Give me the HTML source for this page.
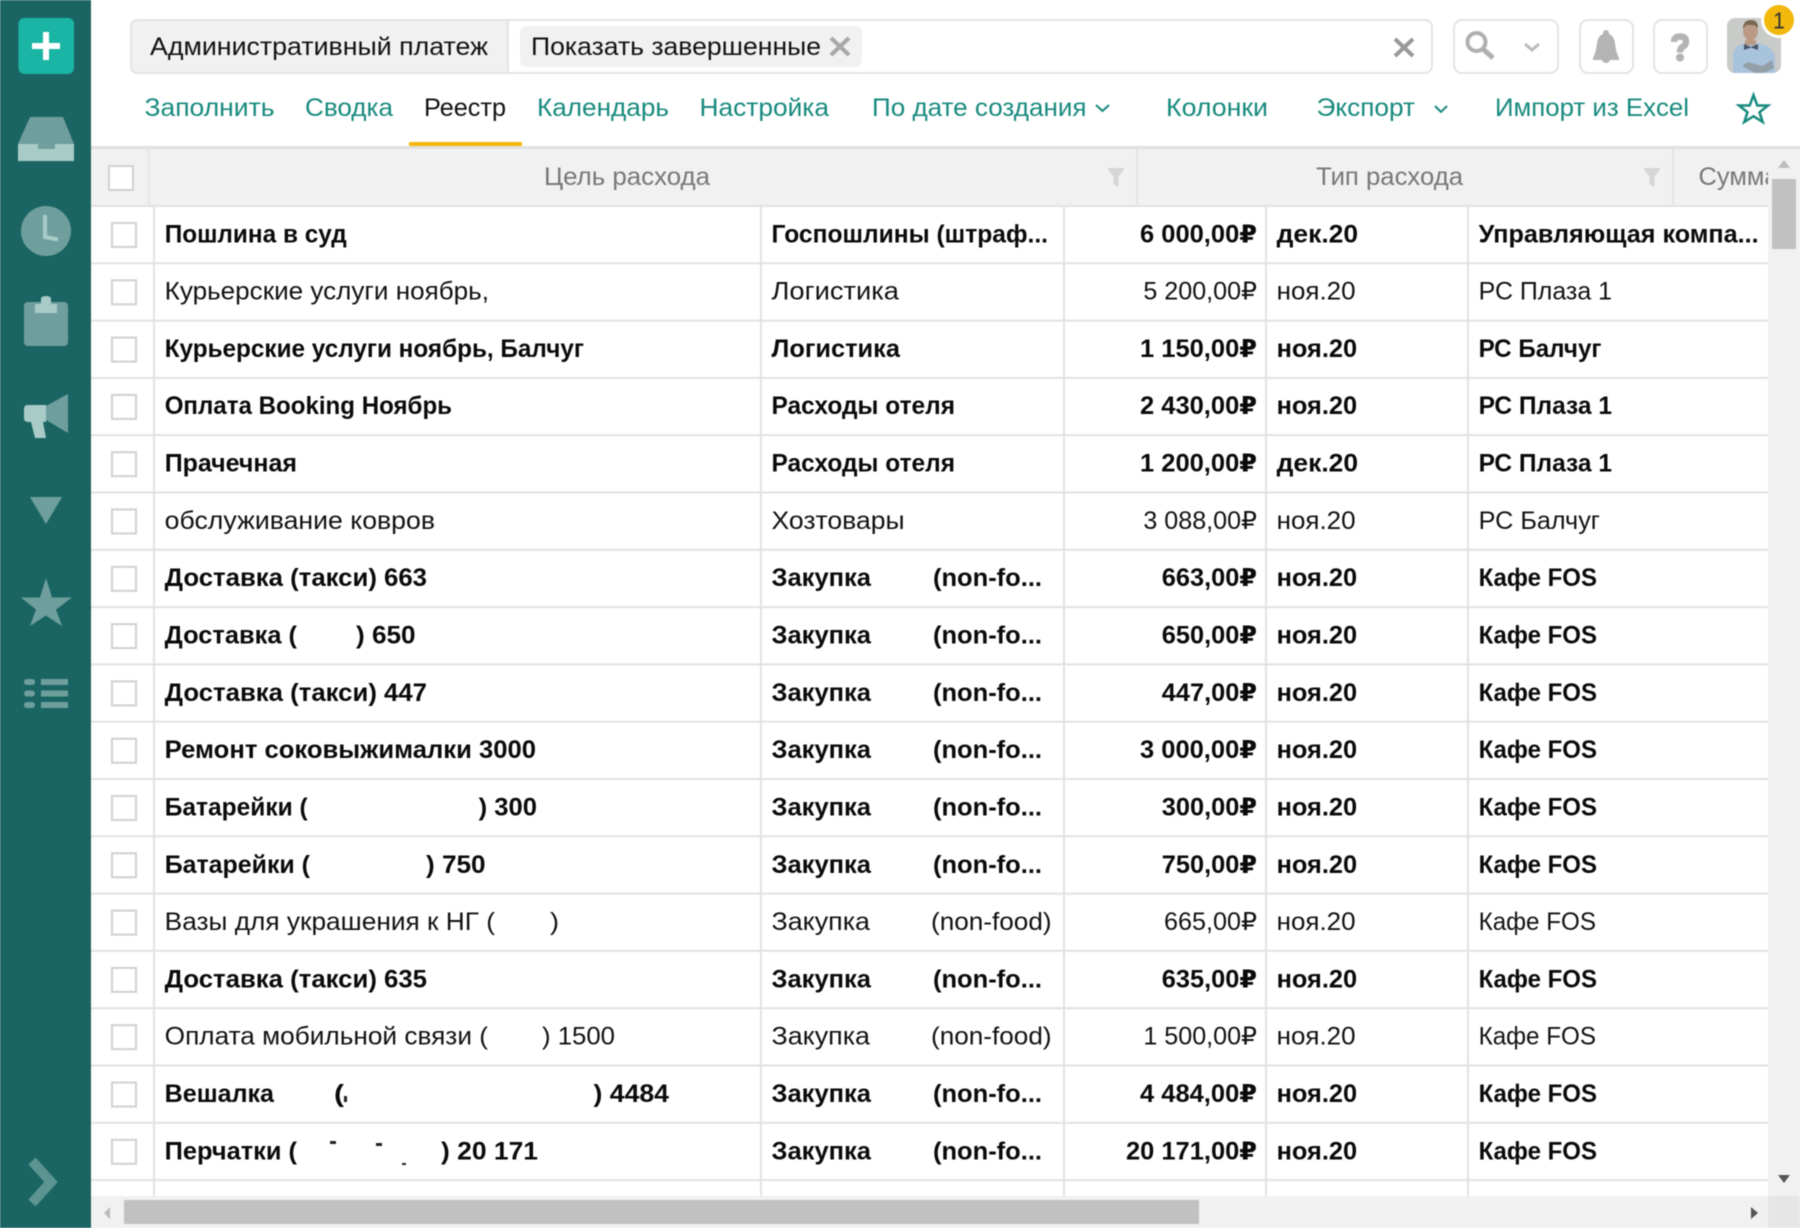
<!DOCTYPE html>
<html lang="ru"><head><meta charset="utf-8"><title>Реестр</title>
<style>
html,body{margin:0;padding:0;background:#fff;width:1800px;height:1228px;overflow:hidden}
svg{display:block;filter:blur(.4px)}
text{font-family:"Liberation Sans","DejaVu Sans",sans-serif;font-size:25px;fill:#111}
.b text,text.b{font-weight:700;fill:#0a0a0a}
.t{fill:#178a7e}
.h{fill:#777}
</style></head><body>
<svg width="1800" height="1228" viewBox="0 0 1800 1228" xmlns="http://www.w3.org/2000/svg">
<defs><clipPath id="hc"><rect x="1675" y="149" width="93" height="57"/></clipPath></defs>
<rect width="1800" height="1228" fill="#fff"/>

<!-- sidebar -->
<rect x="0" y="0" width="91" height="1228" fill="#1a6563"/>
<rect x="18.500" y="18" width="55.500" height="56" rx="6" fill="#1ab5a5"/>
<path d="M46 32V60M32 46H60" stroke="#fff" stroke-width="6" fill="none"/>
<path d="M30 117H63L74 144V150H18V144Z" fill="#6f9f9d"/>
<path d="M18 144H38V149H55V144H74V161H18Z" fill="#a9cbc8"/>
<circle cx="46" cy="231" r="25" fill="#6f9f9d"/>
<path d="M45 215V237L58 239.500" stroke="#a9cbc8" stroke-width="4" fill="none"/>
<rect x="24" y="302" width="44" height="44" rx="4" fill="#6f9f9d"/>
<path d="M35 304H41V299Q41 296 46 296Q51 296 51 299V304H57V313H35Z" fill="#a9cbc8"/>
<path d="M46 406L68 394V433L46 420Z" fill="#6f9f9d"/>
<path d="M28 405H46V422H43L46 438H35L31 422H28Q24 422 24 418V409Q24 405 28 405Z" fill="#a9cbc8"/>
<path d="M30 497H62L46 524Z" fill="#6f9f9d"/>
<path d="M46 578L52 597.500H72L56 609.500L62 626L46 615.500L30 626L36 609.500L21 597.500H40Z" fill="#6f9f9d"/>
<g fill="#6f9f9d"><rect x="24" y="679" width="11" height="6" rx="3"/><rect x="24" y="690.500" width="11" height="6" rx="3"/><rect x="24" y="702" width="11" height="6" rx="3"/><rect x="41" y="679" width="27" height="6"/><rect x="41" y="690.500" width="27" height="6"/><rect x="41" y="702" width="27" height="6"/></g>
<path d="M32 1161L51 1182L32 1203" stroke="#5b9491" stroke-width="10" fill="none"/>

<!-- top bar -->
<rect x="131" y="20" width="1301" height="53" rx="7" fill="#fff" stroke="#e4e4e4" stroke-width="2"/>
<path d="M508 20H138Q131 20 131 27V66Q131 73 138 73H508Z" fill="#f1f1f1" stroke="#e4e4e4" stroke-width="2"/>
<text x="150" y="55" textLength="338" lengthAdjust="spacingAndGlyphs">Административный платеж</text>
<rect x="520" y="26" width="342" height="41" rx="7" fill="#f1f1f1"/>
<text x="531" y="55" textLength="290" lengthAdjust="spacingAndGlyphs">Показать завершенные</text>
<path d="M831 38L849 55M849 38L831 55" stroke="#a8a8a8" stroke-width="4" fill="none"/>
<path d="M1395 39L1413 56M1413 39L1395 56" stroke="#999" stroke-width="4" fill="none"/>
<rect x="1454" y="20" width="104" height="53" rx="8" fill="#fff" stroke="#e4e4e4" stroke-width="2"/>
<circle cx="1476.500" cy="42" r="9" fill="none" stroke="#b0b0b0" stroke-width="4"/>
<path d="M1483 49L1493 58" stroke="#b0b0b0" stroke-width="5" fill="none"/>
<path d="M1525 44L1532 50L1539 44" stroke="#bbb" stroke-width="3" fill="none"/>
<rect x="1580" y="20" width="53" height="53" rx="8" fill="#fff" stroke="#e4e4e4" stroke-width="2"/>
<path d="M1606 30Q1609 30 1609 34Q1614 36 1615 43Q1616 53 1619 58V60H1593V58Q1596 53 1597 43Q1598 36 1603 34Q1603 30 1606 30ZM1602 60H1610Q1609 63 1606 63Q1603 63 1602 60Z" fill="#b4b4b4"/>
<rect x="1654" y="20" width="53" height="53" rx="8" fill="#fff" stroke="#e4e4e4" stroke-width="2"/>
<path d="M1674 42Q1674 36.500 1680 36.500Q1686 36.500 1686 41.500Q1686 45 1682.500 47Q1680 48.500 1680 52.500" stroke="#b4b4b4" stroke-width="6.500" fill="none"/>
<circle cx="1680" cy="57.500" r="4" fill="#b4b4b4"/>

<!-- avatar -->
<rect x="1727" y="18" width="54" height="55" rx="8" fill="#c9cbc9"/>
<path d="M1733 73V54Q1734 46 1742 44L1751 42L1761 44Q1772 46 1775 56V73Z" fill="#a8c3dc"/>
<ellipse cx="1750.500" cy="31" rx="7.500" ry="9.500" fill="#ba9a84"/>
<path d="M1743 29Q1743 20 1751 20Q1758 20 1758 28L1754 25H1746Z" fill="#77684f"/>
<path d="M1745 40H1756V45H1745Z" fill="#ba9a84"/>
<path d="M1744 44L1751 47L1758 44V50L1751 47.500L1744 50Z" fill="#4b5468"/>
<path d="M1755 73L1742 66L1748 62L1762 66L1772 60L1774 68L1764 73Z" fill="#94a0a8"/>
<circle cx="1779" cy="20" r="18" fill="#fff"/>
<circle cx="1779" cy="20" r="15" fill="#f2b90c"/>
<text x="1773" y="28.500" textLength="12" lengthAdjust="spacingAndGlyphs" style="font-size:23px;fill:#333">1</text>

<!-- nav -->
<text class="t" x="144.500" y="116" textLength="130" lengthAdjust="spacingAndGlyphs">Заполнить</text>
<text class="t" x="305" y="116" textLength="88" lengthAdjust="spacingAndGlyphs">Сводка</text>
<text x="424" y="116" textLength="82" lengthAdjust="spacingAndGlyphs">Реестр</text>
<text class="t" x="537" y="116" textLength="132" lengthAdjust="spacingAndGlyphs">Календарь</text>
<text class="t" x="699.500" y="116" textLength="129.500" lengthAdjust="spacingAndGlyphs">Настройка</text>
<text class="t" x="872" y="116" textLength="214.500" lengthAdjust="spacingAndGlyphs">По дате создания</text>
<path d="M1096 105L1102.500 111L1109 105" stroke="#178a7e" stroke-width="2" fill="none"/>
<text class="t" x="1166" y="116" textLength="102" lengthAdjust="spacingAndGlyphs">Колонки</text>
<text class="t" x="1316.500" y="116" textLength="98.500" lengthAdjust="spacingAndGlyphs">Экспорт</text>
<path d="M1435 106L1441 112L1447 106" stroke="#178a7e" stroke-width="2" fill="none"/>
<text class="t" x="1495" y="116" textLength="194" lengthAdjust="spacingAndGlyphs">Импорт из Excel</text>
<path d="M1753.500 95L1757.300 105.500H1768L1759.500 112.300L1762.700 122L1753.500 116.200L1744.300 122L1747.500 112.300L1739 105.500H1749.700Z" fill="none" stroke="#178a7e" stroke-width="2.500"/>
<rect x="91" y="146" width="1709" height="3" fill="#e0e0e0"/>
<rect x="409" y="142" width="113" height="4" rx="1" fill="#f2b90c"/>

<!-- table header -->
<rect x="91" y="149" width="1677" height="57" fill="#f1f1f1"/>
<rect x="148" y="149" width="2" height="57" fill="#e6e6e6"/>
<rect x="1136" y="149" width="2" height="57" fill="#e6e6e6"/>
<rect x="1672" y="149" width="2" height="57" fill="#e6e6e6"/>
<rect x="109" y="166" width="24" height="24" fill="#fff" stroke="#d0d0d0" stroke-width="2"/>
<text class="h" x="544" y="185" textLength="166" lengthAdjust="spacingAndGlyphs">Цель расхода</text>
<text class="h" x="1316" y="185" textLength="147" lengthAdjust="spacingAndGlyphs">Тип расхода</text>
<text class="h" x="1698.500" y="185" textLength="80" lengthAdjust="spacingAndGlyphs" clip-path="url(#hc)">Сумма</text>
<path d="M1107 168H1125L1118.500 177V187L1113.500 184V177Z" fill="#d6d6d6"/>
<path d="M1643 168H1661L1654.500 177V187L1649.500 184V177Z" fill="#d6d6d6"/>

<!-- grid lines -->
<g fill="#e2e2e2">
<rect x="91" y="205" width="1677" height="2"/><rect x="91" y="262.300" width="1677" height="2"/><rect x="91" y="319.600" width="1677" height="2"/><rect x="91" y="376.900" width="1677" height="2"/><rect x="91" y="434.200" width="1677" height="2"/><rect x="91" y="491.500" width="1677" height="2"/><rect x="91" y="548.800" width="1677" height="2"/><rect x="91" y="606.100" width="1677" height="2"/><rect x="91" y="663.400" width="1677" height="2"/><rect x="91" y="720.700" width="1677" height="2"/><rect x="91" y="778" width="1677" height="2"/><rect x="91" y="835.300" width="1677" height="2"/><rect x="91" y="892.600" width="1677" height="2"/><rect x="91" y="949.900" width="1677" height="2"/><rect x="91" y="1007.200" width="1677" height="2"/><rect x="91" y="1064.500" width="1677" height="2"/><rect x="91" y="1121.800" width="1677" height="2"/><rect x="91" y="1179.100" width="1677" height="2"/>
<rect x="153" y="206" width="2" height="990"/><rect x="760" y="206" width="2" height="990"/><rect x="1063" y="206" width="2" height="990"/><rect x="1265" y="206" width="2" height="990"/><rect x="1467" y="206" width="2" height="990"/>
</g>
<!-- checkboxes -->
<g fill="#fff" stroke="#d0d0d0" stroke-width="2">
<rect x="112" y="223" width="24" height="24"/><rect x="112" y="280.300" width="24" height="24"/><rect x="112" y="337.600" width="24" height="24"/><rect x="112" y="394.900" width="24" height="24"/><rect x="112" y="452.200" width="24" height="24"/><rect x="112" y="509.500" width="24" height="24"/><rect x="112" y="566.800" width="24" height="24"/><rect x="112" y="624.100" width="24" height="24"/><rect x="112" y="681.400" width="24" height="24"/><rect x="112" y="738.700" width="24" height="24"/><rect x="112" y="796" width="24" height="24"/><rect x="112" y="853.300" width="24" height="24"/><rect x="112" y="910.600" width="24" height="24"/><rect x="112" y="967.900" width="24" height="24"/><rect x="112" y="1025.200" width="24" height="24"/><rect x="112" y="1082.500" width="24" height="24"/><rect x="112" y="1139.800" width="24" height="24"/>
</g>

<!-- rows -->
<g class="b" transform="translate(0,242.300)">
<text x="164.700" textLength="182" lengthAdjust="spacingAndGlyphs">Пошлина в суд</text>
<text x="771.500" textLength="276.500" lengthAdjust="spacingAndGlyphs">Госпошлины (штраф...</text>
<text x="1140" textLength="117" lengthAdjust="spacingAndGlyphs">6 000,00₽</text>
<text x="1276.600" textLength="81.500" lengthAdjust="spacingAndGlyphs">дек.20</text>
<text x="1478.600" textLength="280" lengthAdjust="spacingAndGlyphs">Управляющая компа...</text>
</g>
<g transform="translate(0,299.600)">
<text x="164.700" textLength="324.300" lengthAdjust="spacingAndGlyphs">Курьерские услуги ноябрь,</text>
<text x="771.500" textLength="127.500" lengthAdjust="spacingAndGlyphs">Логистика</text>
<text x="1143.400" textLength="113.600" lengthAdjust="spacingAndGlyphs">5 200,00₽</text>
<text x="1276.600" textLength="79" lengthAdjust="spacingAndGlyphs">ноя.20</text>
<text x="1478.600" textLength="133.400" lengthAdjust="spacingAndGlyphs">РС Плаза 1</text>
</g>
<g class="b" transform="translate(0,356.900)">
<text x="164.700" textLength="419.300" lengthAdjust="spacingAndGlyphs">Курьерские услуги ноябрь, Балчуг</text>
<text x="771.500" textLength="128.500" lengthAdjust="spacingAndGlyphs">Логистика</text>
<text x="1140" textLength="117" lengthAdjust="spacingAndGlyphs">1 150,00₽</text>
<text x="1276.600" textLength="80.500" lengthAdjust="spacingAndGlyphs">ноя.20</text>
<text x="1478.600" textLength="122.900" lengthAdjust="spacingAndGlyphs">РС Балчуг</text>
</g>
<g class="b" transform="translate(0,414.200)">
<text x="164.700" textLength="287.300" lengthAdjust="spacingAndGlyphs">Оплата Booking Ноябрь</text>
<text x="771.500" textLength="183.500" lengthAdjust="spacingAndGlyphs">Расходы отеля</text>
<text x="1140" textLength="117" lengthAdjust="spacingAndGlyphs">2 430,00₽</text>
<text x="1276.600" textLength="80.500" lengthAdjust="spacingAndGlyphs">ноя.20</text>
<text x="1478.600" textLength="133.400" lengthAdjust="spacingAndGlyphs">РС Плаза 1</text>
</g>
<g class="b" transform="translate(0,471.500)">
<text x="164.700" textLength="132.300" lengthAdjust="spacingAndGlyphs">Прачечная</text>
<text x="771.500" textLength="183.500" lengthAdjust="spacingAndGlyphs">Расходы отеля</text>
<text x="1140" textLength="117" lengthAdjust="spacingAndGlyphs">1 200,00₽</text>
<text x="1276.600" textLength="81.500" lengthAdjust="spacingAndGlyphs">дек.20</text>
<text x="1478.600" textLength="133.400" lengthAdjust="spacingAndGlyphs">РС Плаза 1</text>
</g>
<g transform="translate(0,528.800)">
<text x="164.700" textLength="270.300" lengthAdjust="spacingAndGlyphs">обслуживание ковров</text>
<text x="771.500" textLength="133.100" lengthAdjust="spacingAndGlyphs">Хозтовары</text>
<text x="1143.400" textLength="113.600" lengthAdjust="spacingAndGlyphs">3 088,00₽</text>
<text x="1276.600" textLength="79" lengthAdjust="spacingAndGlyphs">ноя.20</text>
<text x="1478.600" textLength="121.400" lengthAdjust="spacingAndGlyphs">РС Балчуг</text>
</g>
<g class="b" transform="translate(0,586.100)">
<text x="164.700" textLength="262.300" lengthAdjust="spacingAndGlyphs">Доставка (такси) 663</text>
<text x="771.500" textLength="99.500" lengthAdjust="spacingAndGlyphs">Закупка</text>
<text x="933" textLength="109" lengthAdjust="spacingAndGlyphs">(non-fo...</text>
<text x="1161.800" textLength="95.200" lengthAdjust="spacingAndGlyphs">663,00₽</text>
<text x="1276.600" textLength="80.500" lengthAdjust="spacingAndGlyphs">ноя.20</text>
<text x="1478.600" textLength="118.400" lengthAdjust="spacingAndGlyphs">Кафе FOS</text>
</g>
<g class="b" transform="translate(0,643.400)">
<text x="164.700" textLength="132.300" lengthAdjust="spacingAndGlyphs">Доставка (</text>
<text x="356" textLength="59.600" lengthAdjust="spacingAndGlyphs">) 650</text>
<text x="771.500" textLength="99.500" lengthAdjust="spacingAndGlyphs">Закупка</text>
<text x="933" textLength="109" lengthAdjust="spacingAndGlyphs">(non-fo...</text>
<text x="1161.800" textLength="95.200" lengthAdjust="spacingAndGlyphs">650,00₽</text>
<text x="1276.600" textLength="80.500" lengthAdjust="spacingAndGlyphs">ноя.20</text>
<text x="1478.600" textLength="118.400" lengthAdjust="spacingAndGlyphs">Кафе FOS</text>
</g>
<g class="b" transform="translate(0,700.800)">
<text x="164.700" textLength="262.300" lengthAdjust="spacingAndGlyphs">Доставка (такси) 447</text>
<text x="771.500" textLength="99.500" lengthAdjust="spacingAndGlyphs">Закупка</text>
<text x="933" textLength="109" lengthAdjust="spacingAndGlyphs">(non-fo...</text>
<text x="1161.800" textLength="95.200" lengthAdjust="spacingAndGlyphs">447,00₽</text>
<text x="1276.600" textLength="80.500" lengthAdjust="spacingAndGlyphs">ноя.20</text>
<text x="1478.600" textLength="118.400" lengthAdjust="spacingAndGlyphs">Кафе FOS</text>
</g>
<g class="b" transform="translate(0,758.200)">
<text x="164.700" textLength="371.300" lengthAdjust="spacingAndGlyphs">Ремонт соковыжималки 3000</text>
<text x="771.500" textLength="99.500" lengthAdjust="spacingAndGlyphs">Закупка</text>
<text x="933" textLength="109" lengthAdjust="spacingAndGlyphs">(non-fo...</text>
<text x="1140" textLength="117" lengthAdjust="spacingAndGlyphs">3 000,00₽</text>
<text x="1276.600" textLength="80.500" lengthAdjust="spacingAndGlyphs">ноя.20</text>
<text x="1478.600" textLength="118.400" lengthAdjust="spacingAndGlyphs">Кафе FOS</text>
</g>
<g class="b" transform="translate(0,815.500)">
<text x="164.700" textLength="143" lengthAdjust="spacingAndGlyphs">Батарейки (</text>
<text x="478.700" textLength="58.300" lengthAdjust="spacingAndGlyphs">) 300</text>
<text x="771.500" textLength="99.500" lengthAdjust="spacingAndGlyphs">Закупка</text>
<text x="933" textLength="109" lengthAdjust="spacingAndGlyphs">(non-fo...</text>
<text x="1161.800" textLength="95.200" lengthAdjust="spacingAndGlyphs">300,00₽</text>
<text x="1276.600" textLength="80.500" lengthAdjust="spacingAndGlyphs">ноя.20</text>
<text x="1478.600" textLength="118.400" lengthAdjust="spacingAndGlyphs">Кафе FOS</text>
</g>
<g class="b" transform="translate(0,872.800)">
<text x="164.700" textLength="145.300" lengthAdjust="spacingAndGlyphs">Батарейки (</text>
<text x="426" textLength="59.600" lengthAdjust="spacingAndGlyphs">) 750</text>
<text x="771.500" textLength="99.500" lengthAdjust="spacingAndGlyphs">Закупка</text>
<text x="933" textLength="109" lengthAdjust="spacingAndGlyphs">(non-fo...</text>
<text x="1161.800" textLength="95.200" lengthAdjust="spacingAndGlyphs">750,00₽</text>
<text x="1276.600" textLength="80.500" lengthAdjust="spacingAndGlyphs">ноя.20</text>
<text x="1478.600" textLength="118.400" lengthAdjust="spacingAndGlyphs">Кафе FOS</text>
</g>
<g transform="translate(0,930.100)">
<text x="164.700" textLength="330.300" lengthAdjust="spacingAndGlyphs">Вазы для украшения к НГ (</text>
<text x="550" textLength="9" lengthAdjust="spacingAndGlyphs">)</text>
<text x="771.500" textLength="98.500" lengthAdjust="spacingAndGlyphs">Закупка</text>
<text x="931" textLength="120.600" lengthAdjust="spacingAndGlyphs">(non-food)</text>
<text x="1164" textLength="93" lengthAdjust="spacingAndGlyphs">665,00₽</text>
<text x="1276.600" textLength="79" lengthAdjust="spacingAndGlyphs">ноя.20</text>
<text x="1478.600" textLength="117.400" lengthAdjust="spacingAndGlyphs">Кафе FOS</text>
</g>
<g class="b" transform="translate(0,987.400)">
<text x="164.700" textLength="262.300" lengthAdjust="spacingAndGlyphs">Доставка (такси) 635</text>
<text x="771.500" textLength="99.500" lengthAdjust="spacingAndGlyphs">Закупка</text>
<text x="933" textLength="109" lengthAdjust="spacingAndGlyphs">(non-fo...</text>
<text x="1161.800" textLength="95.200" lengthAdjust="spacingAndGlyphs">635,00₽</text>
<text x="1276.600" textLength="80.500" lengthAdjust="spacingAndGlyphs">ноя.20</text>
<text x="1478.600" textLength="118.400" lengthAdjust="spacingAndGlyphs">Кафе FOS</text>
</g>
<g transform="translate(0,1044.700)">
<text x="164.700" textLength="323.300" lengthAdjust="spacingAndGlyphs">Оплата мобильной связи (</text>
<text x="542" textLength="73" lengthAdjust="spacingAndGlyphs">) 1500</text>
<text x="771.500" textLength="98.500" lengthAdjust="spacingAndGlyphs">Закупка</text>
<text x="931" textLength="120.600" lengthAdjust="spacingAndGlyphs">(non-food)</text>
<text x="1143.400" textLength="113.600" lengthAdjust="spacingAndGlyphs">1 500,00₽</text>
<text x="1276.600" textLength="79" lengthAdjust="spacingAndGlyphs">ноя.20</text>
<text x="1478.600" textLength="117.400" lengthAdjust="spacingAndGlyphs">Кафе FOS</text>
</g>
<g class="b" transform="translate(0,1102)">
<text x="164.700" textLength="109.300" lengthAdjust="spacingAndGlyphs">Вешалка</text>
<text x="334" textLength="10" lengthAdjust="spacingAndGlyphs">(</text>
<text x="593.500" textLength="75.500" lengthAdjust="spacingAndGlyphs">) 4484</text>
<text x="771.500" textLength="99.500" lengthAdjust="spacingAndGlyphs">Закупка</text>
<text x="933" textLength="109" lengthAdjust="spacingAndGlyphs">(non-fo...</text>
<text x="1140" textLength="117" lengthAdjust="spacingAndGlyphs">4 484,00₽</text>
<text x="1276.600" textLength="80.500" lengthAdjust="spacingAndGlyphs">ноя.20</text>
<text x="1478.600" textLength="118.400" lengthAdjust="spacingAndGlyphs">Кафе FOS</text>
</g>
<g class="b" transform="translate(0,1159.300)">
<text x="164.700" textLength="132.300" lengthAdjust="spacingAndGlyphs">Перчатки (</text>
<text x="441" textLength="97" lengthAdjust="spacingAndGlyphs">) 20 171</text>
<text x="771.500" textLength="99.500" lengthAdjust="spacingAndGlyphs">Закупка</text>
<text x="933" textLength="109" lengthAdjust="spacingAndGlyphs">(non-fo...</text>
<text x="1126" textLength="131" lengthAdjust="spacingAndGlyphs">20 171,00₽</text>
<text x="1276.600" textLength="80.500" lengthAdjust="spacingAndGlyphs">ноя.20</text>
<text x="1478.600" textLength="118.400" lengthAdjust="spacingAndGlyphs">Кафе FOS</text>
</g>
<g fill="#222"><rect x="330" y="1141" width="6" height="3"/><rect x="376" y="1143" width="6" height="3"/><rect x="402" y="1163" width="4" height="2"/><rect x="344" y="1096" width="3" height="6"/></g>

<!-- scrollbars -->
<rect x="1768" y="149" width="32" height="1079" fill="#f1f1f1"/>
<rect x="91" y="1196" width="1677" height="32" fill="#f1f1f1"/>
<rect x="1768" y="1196" width="32" height="32" fill="#e6e6e6"/>
<rect x="1772" y="179" width="24" height="70" fill="#c1c1c1"/>
<rect x="124" y="1200" width="1075" height="24" fill="#c1c1c1"/>
<path d="M1784 160L1790 168H1778Z" fill="#bbb"/>
<path d="M1784 1183L1790 1175H1778Z" fill="#555"/>
<path d="M104 1213L110 1207V1219Z" fill="#bbb"/>
<path d="M1758 1213L1751 1207V1219Z" fill="#555"/>
</svg>
</body></html>
